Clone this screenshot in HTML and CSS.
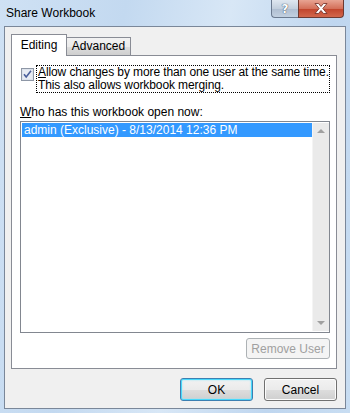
FILE: index.html
```html
<!DOCTYPE html>
<html>
<head>
<meta charset="utf-8">
<link rel="stylesheet" href="styles.css">
</head>
<body>
<div class="window">
  <div class="titlebar">
    <div class="title">Share Workbook</div>
    <div class="controls">
      <div class="ctl help"><span class="q">?</span></div>
      <div class="ctl close">
        <svg width="14" height="11" viewBox="0 0 14 11"><path d="M1 0.5 L4.5 0.5 L7 3.5 L9.5 0.5 L13 0.5 L8.8 5.5 L13 10.5 L9.5 10.5 L7 7.5 L4.5 10.5 L1 10.5 L5.2 5.5 Z" fill="#fff" stroke="#6d2a22" stroke-width="0.8" stroke-linejoin="round"/></svg>
      </div>
    </div>
  </div>
  <div class="client">
    <div class="tabs">
      <div class="tab active">Editing</div>
      <div class="tab">Advanced</div>
    </div>
    <div class="panel">
      <div class="checkrow">
        <div class="checkbox">
          <svg width="13" height="13" viewBox="0 0 13 13">
            <rect x="0.5" y="0.5" width="12" height="12" fill="#dde3ec" stroke="#8e97a6"/>
            <rect x="2" y="2" width="9" height="9" fill="#e8ecf3"/>
            <path d="M3 6.2 L5.2 9 L10 2.8" fill="none" stroke="#4a5f9c" stroke-width="1.6"/>
          </svg>
        </div>
        <div class="checklabel"><span class="u">A</span>llow changes by more than one user at the same time.<br>This also allows workbook merging.</div>
      </div>
      <div class="wholabel"><span class="u">W</span>ho has this workbook open now:</div>
      <div class="listbox">
        <div class="items">
          <div class="item selected">admin (Exclusive) - 8/13/2014 12:36 PM</div>
        </div>
        <div class="scrollbar">
          <div class="arrow up"></div>
          <div class="arrow down"></div>
        </div>
      </div>
      <div class="removerow">
        <div class="btn disabled remove">Remove User</div>
      </div>
    </div>
    <div class="buttons">
      <div class="btn default">OK</div>
      <div class="btn">Cancel</div>
    </div>
  </div>
</div>
</body>
</html>
```

FILE: styles.css
```css
* { box-sizing: border-box; }
html, body { margin: 0; padding: 0; }
body {
  width: 350px;
  height: 413px;
  overflow: hidden;
  font-family: "Liberation Sans", Arial, sans-serif;
  font-size: 12px;
  color: #000;
}
.window {
  width: 350px;
  height: 413px;
  display: flex;
  flex-direction: column;
  background: linear-gradient(100deg, #cfe1f4 0%, #c3d9f0 30%, #d8e7f6 55%, #bfd6ef 80%, #c8ddf2 100%);
}
.titlebar {
  height: 26px;
  display: flex;
  align-items: flex-start;
}
.title {
  padding: 6px 0 0 6px;
  font-size: 12px;
  color: #000;
}
.controls {
  margin-left: auto;
  margin-right: 6px;
  display: flex;
}
.ctl {
  height: 18px;
  display: flex;
  align-items: center;
  justify-content: center;
  border: 1px solid #6b7a8f;
  border-top: none;
}
.help {
  width: 27px;
  border-radius: 0 0 0 4px;
  border-right: none;
  background: linear-gradient(#dfe7f0, #c3cfdd 50%, #aebdd0 51%, #c2d0e0);
}
.q {
  font-family: "DejaVu Sans", sans-serif;
  font-weight: bold;
  font-size: 12px;
  color: #fff;
  text-shadow: 0 0 1px #3c4a60, 0 0 1px #3c4a60;
}
.close {
  width: 46px;
  border-radius: 0 0 4px 0;
  background: linear-gradient(#e8a493, #d4705a 50%, #c0432b 51%, #d2674c);
  border-color: #6d3a32;
}
.client {
  flex: 1;
  margin: 0 4px 4px 4px;
  border: 1px solid #7a8799;
  background: #f0f0f0;
  padding: 7px 8px 0 6px;
  display: flex;
  flex-direction: column;
}
.tabs {
  display: flex;
  align-items: flex-end;
  height: 21px;
  position: relative;
  z-index: 1;
}
.tab {
  border: 1px solid #898c95;
  border-bottom: none;
  height: 18px;
  line-height: 17px;
  text-align: center;
  background: linear-gradient(#f2f2f2, #ebebeb 50%, #dddddd 51%, #cfcfcf);
}
.tab + .tab { border-left: none; }
.tab.active {
  height: 22px;
  margin-bottom: -1px;
  background: #fff;
  line-height: 21px;
  width: 56px;
}
.tab:not(.active) { width: 64px; }
.panel {
  height: 314px;
  border: 1px solid #898c95;
  background: #fff;
  padding: 9px 6px 0 8px;
  display: flex;
  flex-direction: column;
}
.checkrow {
  display: flex;
  align-items: flex-start;
}
.checkbox {
  width: 13px;
  height: 13px;
  margin: 3px 0 0 1px;
}
.checkbox svg { display: block; }
.checklabel {
  margin-left: 2px;
  border: 1px dotted #000;
  width: 294px;
  padding: 0 0 0 1px;
  line-height: 13px;
  white-space: nowrap;
  letter-spacing: -0.1px;
}
.u { text-decoration: underline; }
.wholabel {
  margin-top: 12px;
  line-height: 15px;
}
.listbox {
  margin-top: 1px;
  width: 310px;
  height: 212px;
  border: 1px solid #828790;
  display: flex;
  padding: 1px 0 1px 1px;
}
.items { flex: 1; }
.item {
  height: 14px;
  line-height: 14px;
  padding-left: 2px;
}
.item.selected { background: #3399ff; color: #fff; }
.scrollbar {
  width: 17px;
  background: #eaeaea;
  border-left: 1px solid #f4f4f4;
  display: flex;
  flex-direction: column;
  justify-content: space-between;
  align-items: center;
  padding: 6px 0 6px;
}
.arrow {
  width: 0;
  height: 0;
  border-left: 4px solid transparent;
  border-right: 4px solid transparent;
}
.arrow.up { border-bottom: 4px solid #a0a0a0; }
.arrow.down { border-top: 4px solid #a0a0a0; }
.removerow {
  display: flex;
  justify-content: flex-end;
  margin-top: 5px;
}
.btn {
  width: 73px;
  height: 23px;
  border: 1px solid #707070;
  border-radius: 3px;
  display: flex;
  align-items: center;
  justify-content: center;
  background: linear-gradient(#f2f2f2, #ebebeb 50%, #dddddd 51%, #cfcfcf);
  box-shadow: inset 0 0 0 1px #fcfcfc;
}
.btn.remove { width: 84px; height: 21px; }
.btn.disabled {
  background: #f4f4f4;
  border-color: #adb2b5;
  color: #a0a0a0;
  box-shadow: none;
}
.btn.default {
  border-color: #3c7fb1;
  box-shadow: inset 0 0 0 1px #48d8fb, inset 0 0 2px 1px #8fe6fb;
}
.buttons {
  display: flex;
  justify-content: flex-end;
  gap: 11px;
  margin-top: 9px;
}
```
